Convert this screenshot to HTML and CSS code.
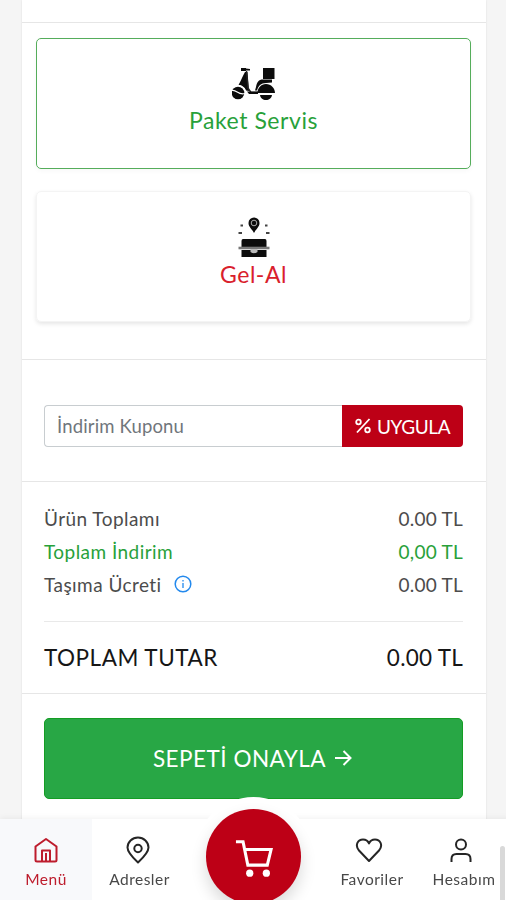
FILE: index.html
```html
<!DOCTYPE html>
<html lang="tr">
<head>
    <meta charset="UTF-8">
    <meta name="viewport" content="width=device-width, initial-scale=1.0">
    <title>Sepetim</title>
    <link rel="stylesheet" href="styles.css">
</head>
<body>
    <main class="cart">
        <div class="cart-top"></div>

        <section class="delivery">
            <div class="option selected">
                <svg class="option-icon scooter" width="44" height="34" viewBox="0 0 44 34">
                    <path d="M9 1h5v3H9zM14 1.500l4 .5v1.500h-4z"/>
                    <path d="M31 1h11.500v11H31z"/>
                    <path d="M13 5h2.500l1.500 19-3-.5C13 20 10 18.500 6.500 18 9 14 10.500 9 13 5z"/>
                    <path d="M14.500 4l1.500 17 3 4.500h7" fill="none" stroke="#222" stroke-width="1.400"/>
                    <path d="M24 20c1-5 2.500-7.500 7-7.500h9v3l-6 .5c-5 0-8 3-9 7.500h-2z"/>
                    <path d="M25.500 26c0-5 3.500-9 8.500-9s9 4 9 9zM28 28h12c-.5 3.500-3 5-6 5s-5.500-1.500-6-5zM15 24.500h11V27H17z"/>
                    <circle cx="6" cy="26" r="6.300"/>
                    <path d="M0 23.500c5-1 6 5 13 3M2 19.500c5-3 10 0 11.500 5" fill="none" stroke="#fff" stroke-width="1.100"/>
                </svg>
                <span class="option-name">Paket Servis</span>
            </div>
            <div class="option">
                <svg class="option-icon box" width="34" height="42" viewBox="0 0 34 42">
                    <path d="M17 16c-2-4-5.500-6-5.500-10a5.500 5.500 0 0 1 11 0c0 4-3.500 6-5.500 10z"/>
                    <circle cx="17" cy="6" r="2.800" fill="none" stroke="#aaa"/>
                    <path d="M3.500 8.500h2.500M1.500 16h3.500M28 8.500h2.500M29 16h3.500" stroke="#444" stroke-width="2.200"/>
                    <path d="M6 22h22q1.500 0 1.500 2v6h-25v-6q0-2 1.500-2zM4.500 33h25v7h-25z"/>
                    <path d="M1.500 31h31" stroke="#777" stroke-width="2.600"/>
                    <path d="M13.500 32h7v3q-3.500 2.500-7 0z" fill="#bbb"/>
                </svg>
                <span class="option-name">Gel-Al</span>
            </div>
        </section>

        <section class="coupon">
            <input class="coupon-input" type="text" placeholder="İndirim Kuponu">
            <button class="coupon-btn">
                <svg width="16" height="16" viewBox="0 0 16 16" fill="none" stroke="currentColor" stroke-width="1.800">
                    <path d="M14.500 1L2 14.500"/>
                    <circle cx="3.500" cy="4" r="2.300"/>
                    <circle cx="12.500" cy="12" r="2.300"/>
                </svg>
                <span class="coupon-text">UYGULA</span>
            </button>
        </section>

        <section class="summary">
            <div class="row">
                <span>Ürün Toplamı</span>
                <span class="price">0.00 TL</span>
            </div>
            <div class="row discount">
                <span>Toplam İndirim</span>
                <span class="price">0,00 TL</span>
            </div>
            <div class="row">
                <span>Taşıma Ücreti</span>
                <svg class="info" width="18" height="18" viewBox="0 0 18 18" fill="none" stroke="currentColor">
                    <circle cx="9" cy="9" r="7.800" stroke-width="1.500"/>
                    <path d="M9 8v5M9 5v1.500" stroke-width="1.300"/>
                </svg>
                <span class="price">0.00 TL</span>
            </div>
            <div class="row total">
                <span>TOPLAM TUTAR</span>
                <span class="price">0.00 TL</span>
            </div>
        </section>

        <section class="confirm">
            <button class="confirm-btn">
                <span>SEPETİ ONAYLA</span>
                <svg width="18" height="18" viewBox="0 0 18 18" fill="none" stroke="currentColor" stroke-width="2">
                    <path d="M1 8h15M9.500 1l7 7-7 7"/>
                </svg>
            </button>
        </section>
    </main>

    <nav class="bottom-nav">
        <a class="nav-item active">
            <svg width="26" height="28" viewBox="0 0 26 28">
                <path d="M2.500 10.500L13 3l10.500 7.500V24q0 1.500-1.500 1.500H4q-1.500 0-1.500-1.500z"/>
                <path d="M9 25V14.500h8V25M13 17v8"/>
            </svg>
            <span>Menü</span>
        </a>
        <a class="nav-item addresses">
            <svg width="26" height="28" viewBox="0 0 26 28">
                <path d="M13 26.500C6 20 2.500 16 2.500 11.500a10.500 10 0 0 1 21 0C23.500 16 20 20 13 26.500z"/>
                <circle cx="13" cy="12.500" r="3.700"/>
            </svg>
            <span>Adresler</span>
        </a>
        <a class="nav-cart">
            <span class="cart-circle">
                <svg width="38" height="38" viewBox="0 0 40 40" fill="none" stroke="#fff" stroke-width="3.200">
                    <path d="M1 3h7.500l5 24.500h20.500L38 11H10"/>
                    <circle cx="15.500" cy="36" r="3.800" fill="#fff" stroke="none"/>
                    <circle cx="33" cy="36" r="3.800" fill="#fff" stroke="none"/>
                </svg>
            </span>
        </a>
        <a class="nav-item favorites">
            <svg width="28" height="28" viewBox="0 0 28 28">
                <path d="M14 25L4 14.500C-.5 9 3 3.500 8 3.500c3 0 5 1.500 6 4 1-2.500 3-4 6-4 5 0 8.500 5.500 4 11z"/>
            </svg>
            <span>Favoriler</span>
        </a>
        <a class="nav-item account">
            <svg width="26" height="28" viewBox="0 0 26 28">
                <circle cx="13" cy="8.500" r="5"/>
                <path d="M3.500 26v-3q0-5 5-5h9q5 0 5 5v3"/>
            </svg>
            <span>Hesabım</span>
        </a>
    </nav>
    <div class="scroll-thumb"></div>
</body>
</html>
```
FILE: styles.css
```css
* {
    box-sizing: border-box;
    margin: 0;
    padding: 0;
}

body {
    height: 900px;
    overflow: hidden;
    background-color: #f5f5f5;
    color: #333;
    font-family: Lato, "Open Sans", sans-serif;
}

button {
    border: none;
    color: white;
    font-family: inherit;
}

span {
    white-space: nowrap;
}

.cart {
    width: 464px;
    height: 900px;
    margin-left: 22px;
    background-color: white;
    box-shadow: 0 0 2px rgba(0, 0, 0, 0.1);
}

.cart-top {
    height: 23px;
    border-bottom: 1px solid #e6e6e6;
}

.delivery {
    height: 337px;
    padding: 15px 15px 0 14px;
    border-bottom: 1px solid #e6e6e6;
}

.option {
    display: flex;
    flex-direction: column;
    align-items: center;
    height: 131px;
    margin-bottom: 22px;
    border: 1px solid #f4f4f4;
    border-radius: 5px;
    box-shadow: 0 2px 4px rgba(0, 0, 0, 0.1);
    color: #d9202c;
    font-size: 23px;
    line-height: 28px;
    letter-spacing: 0.55px;
}

.option.selected {
    border-color: #55ad5b;
    box-shadow: 0 2px 5px rgba(0, 0, 0, 0.03);
    color: #28a13a;
}

.option-icon {
    fill: #0c0c0c;
}

.scooter {
    margin: 28px 0 5px;
}

.box {
    margin: 25px 0 1px;
}

.coupon {
    display: flex;
    height: 122px;
    padding: 45px 23px 0 22px;
    border-bottom: 1px solid #e6e6e6;
}

.coupon-input {
    flex: 1;
    min-width: 0;
    height: 42px;
    padding-left: 12px;
    border: 1px solid #c8cdd0;
    border-right: none;
    border-radius: 4px 0 0 4px;
    font-family: inherit;
    font-size: 18.5px;
    letter-spacing: 0.15px;
}

.coupon-input::placeholder {
    color: #70767b;
}

.coupon-btn {
    display: flex;
    align-items: center;
    gap: 6px;
    width: 121px;
    height: 42px;
    padding-left: 13px;
    border-radius: 0 4px 4px 0;
    background-color: #bd0016;
    font-size: 19px;
}

.coupon-text {
    letter-spacing: -0.4px;
}

.summary {
    height: 212px;
    padding: 20px 23px 0 22px;
    border-bottom: 1px solid #e6e6e6;
}

.row {
    display: flex;
    align-items: center;
    height: 33px;
    color: #4c4c4c;
    font-size: 19px;
    letter-spacing: 0.45px;
}

.row.discount {
    color: #28a13a;
}

.price {
    margin-left: auto;
    letter-spacing: 0.25px;
}

.info {
    margin: 0 0 2px 12px;
    color: #2389ed;
}

.row.total {
    height: 73px;
    margin-top: 20px;
    padding-bottom: 1px;
    border-top: 1px solid #e9e9e9;
    color: #161616;
    font-size: 22.5px;
    letter-spacing: 0.5px;
}

.confirm {
    padding: 24px 23px 0 22px;
}

.confirm-btn {
    display: flex;
    justify-content: center;
    align-items: center;
    gap: 8px;
    width: 100%;
    height: 81px;
    padding-right: 2px;
    border: 1px solid #149d24;
    border-radius: 5px;
    background-color: #28a745;
    font-size: 22.5px;
    letter-spacing: 0.5px;
}

.bottom-nav {
    position: fixed;
    bottom: 0;
    left: 0;
    display: flex;
    width: 510px;
    height: 81px;
    background-color: white;
    box-shadow: 0 -1px 6px rgba(0, 0, 0, 0.06);
}

.nav-item {
    display: flex;
    flex-direction: column;
    align-items: center;
    gap: 5px;
    width: 92px;
    padding-top: 17px;
    color: #484848;
    font-size: 15.5px;
    line-height: 20px;
    letter-spacing: 0.5px;
}

.nav-item svg {
    fill: none;
    stroke: #252525;
    stroke-width: 2;
    stroke-linejoin: round;
}

.nav-item.active {
    background-color: #f8f9fb;
    color: #bd1c2c;
}

.nav-item.active svg {
    stroke: #bd1c2c;
}

.addresses span {
    padding-left: 3px;
}

.favorites span,
.account span {
    padding-left: 6px;
}

/* round button rises above the bar */
.nav-cart {
    width: 119px;
    height: 119px;
    margin: -22px 10px 0;
    padding: 12px;
    border-radius: 50%;
    background-color: white;
}

.cart-circle {
    display: flex;
    justify-content: center;
    align-items: center;
    height: 95px;
    padding-top: 2px;
    border-radius: 50%;
    background-color: #bd0016;
    box-shadow: 0 8px 16px rgba(0, 0, 0, 0.15);
}

.scroll-thumb {
    position: fixed;
    right: 1px;
    bottom: 0;
    width: 5px;
    height: 54px;
    border-radius: 3px 3px 0 0;
    background-color: #d9d9d9;
}
```
